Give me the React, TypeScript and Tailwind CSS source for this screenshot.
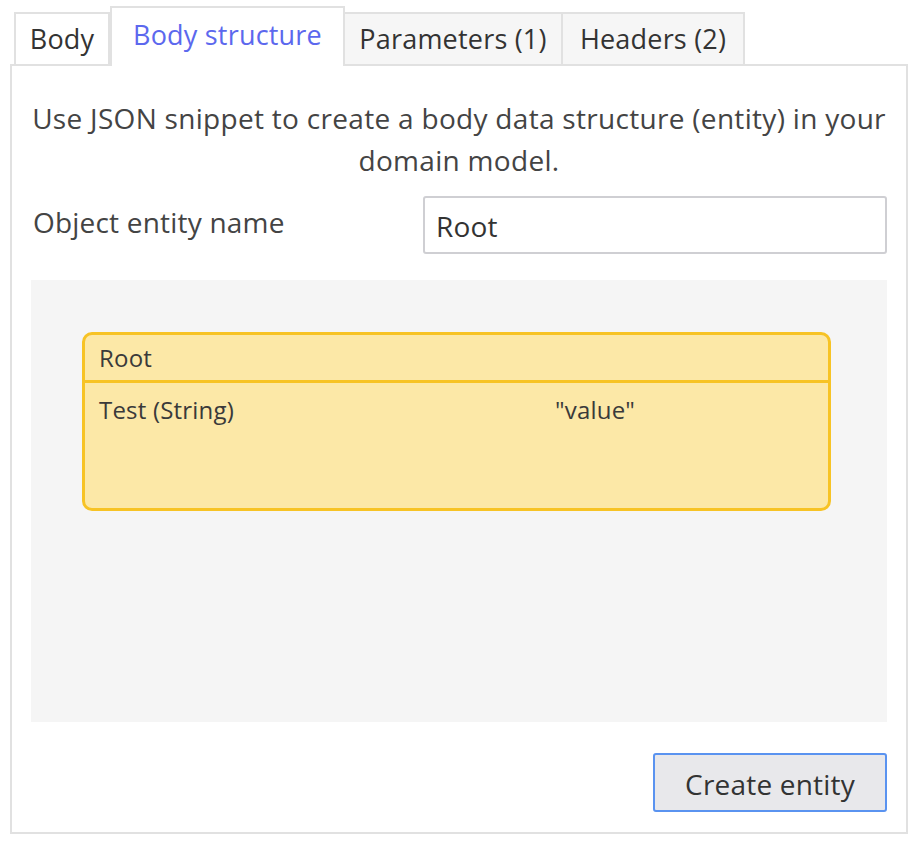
const tabs = [
  { label: "Body", w: "w-[96px]" },
  { label: "Body structure", w: "w-[235px]", active: true },
  { label: "Parameters (1)", w: "w-[220px]" },
  { label: "Headers (2)", w: "w-[184px]" },
];

function Tabs() {
  return (
    <div className="flex items-end pl-[4px] relative z-10">
      {tabs.map((t) =>
        t.active ? (
          <div
            key={t.label}
            className={`${t.w} relative z-10 h-[60px] -mb-[2px] flex items-center justify-center border-2 border-b-0 border-[#e1e1e1] bg-white text-[27px] text-[#5c68ee] pb-[4px]`}
          >
            {t.label}
          </div>
        ) : (
          <div
            key={t.label}
            className={`${t.w} h-[52px] flex items-center justify-center border-2 border-b-0 border-[#e1e1e1] -ml-[2px] first:ml-0 text-[27px] text-[#333] ${
              t.label === "Body" ? "bg-white" : "bg-[#f6f6f6]"
            }`}
          >
            {t.label}
          </div>
        )
      )}
    </div>
  );
}

function EntityCard() {
  return (
    <div className="ml-[51px] mt-[51px] w-[749px] h-[179px] rounded-[10px] border-[3px] border-[#f7c325] bg-[#fce8a7] text-[24px] text-[#3a3a3a] flex flex-col">
      <div className="h-[48px] px-[14px] flex items-center border-b-[3px] border-[#f7c325]">
        Root
      </div>
      <div className="flex px-[14px] pt-[9px]">
        <span className="w-[456px]">Test (String)</span>
        <span>"value"</span>
      </div>
    </div>
  );
}

export default function App() {
  return (
    <div
      className="w-[919px] h-[847px] bg-white pl-[10px] pt-[6px] tracking-[0.2px]"
      style={{ fontFamily: '"Open Sans", "Noto Sans", sans-serif' }}
    >
      <Tabs />
      <div className="w-[898px] h-[770px] border-2 border-[#e1e1e1] bg-white px-[19px] pt-[31px] flex flex-col">
        <p className="text-center text-[28px] leading-[42px] text-[#444] tracking-[0.3px]">
          Use JSON snippet to create a body data structure (entity) in your
          <br />
          domain model.
        </p>
        <div className="flex items-center mt-[15px]">
          <label className="flex-1 pl-[2px] text-[28px] text-[#444] -mt-[6px]">
            Object entity name
          </label>
          <div className="w-[464px] h-[58px] border-2 border-[#cfcfd3] rounded-[3px] flex items-center px-[11px] text-[28px] text-[#333] pt-[2px]">
            Root
          </div>
        </div>
        <div className="mt-[26px] h-[442px] bg-[#f5f5f5] pt-px">
          <EntityCard />
        </div>
        <div className="flex justify-end mt-[31px]">
          <button className="w-[234px] h-[59px] rounded-[3px] border-2 border-[#5a93f0] bg-[#e8e8eb] text-[28px] text-[#333] pt-[2px]">
            Create entity
          </button>
        </div>
      </div>
    </div>
  );
}
